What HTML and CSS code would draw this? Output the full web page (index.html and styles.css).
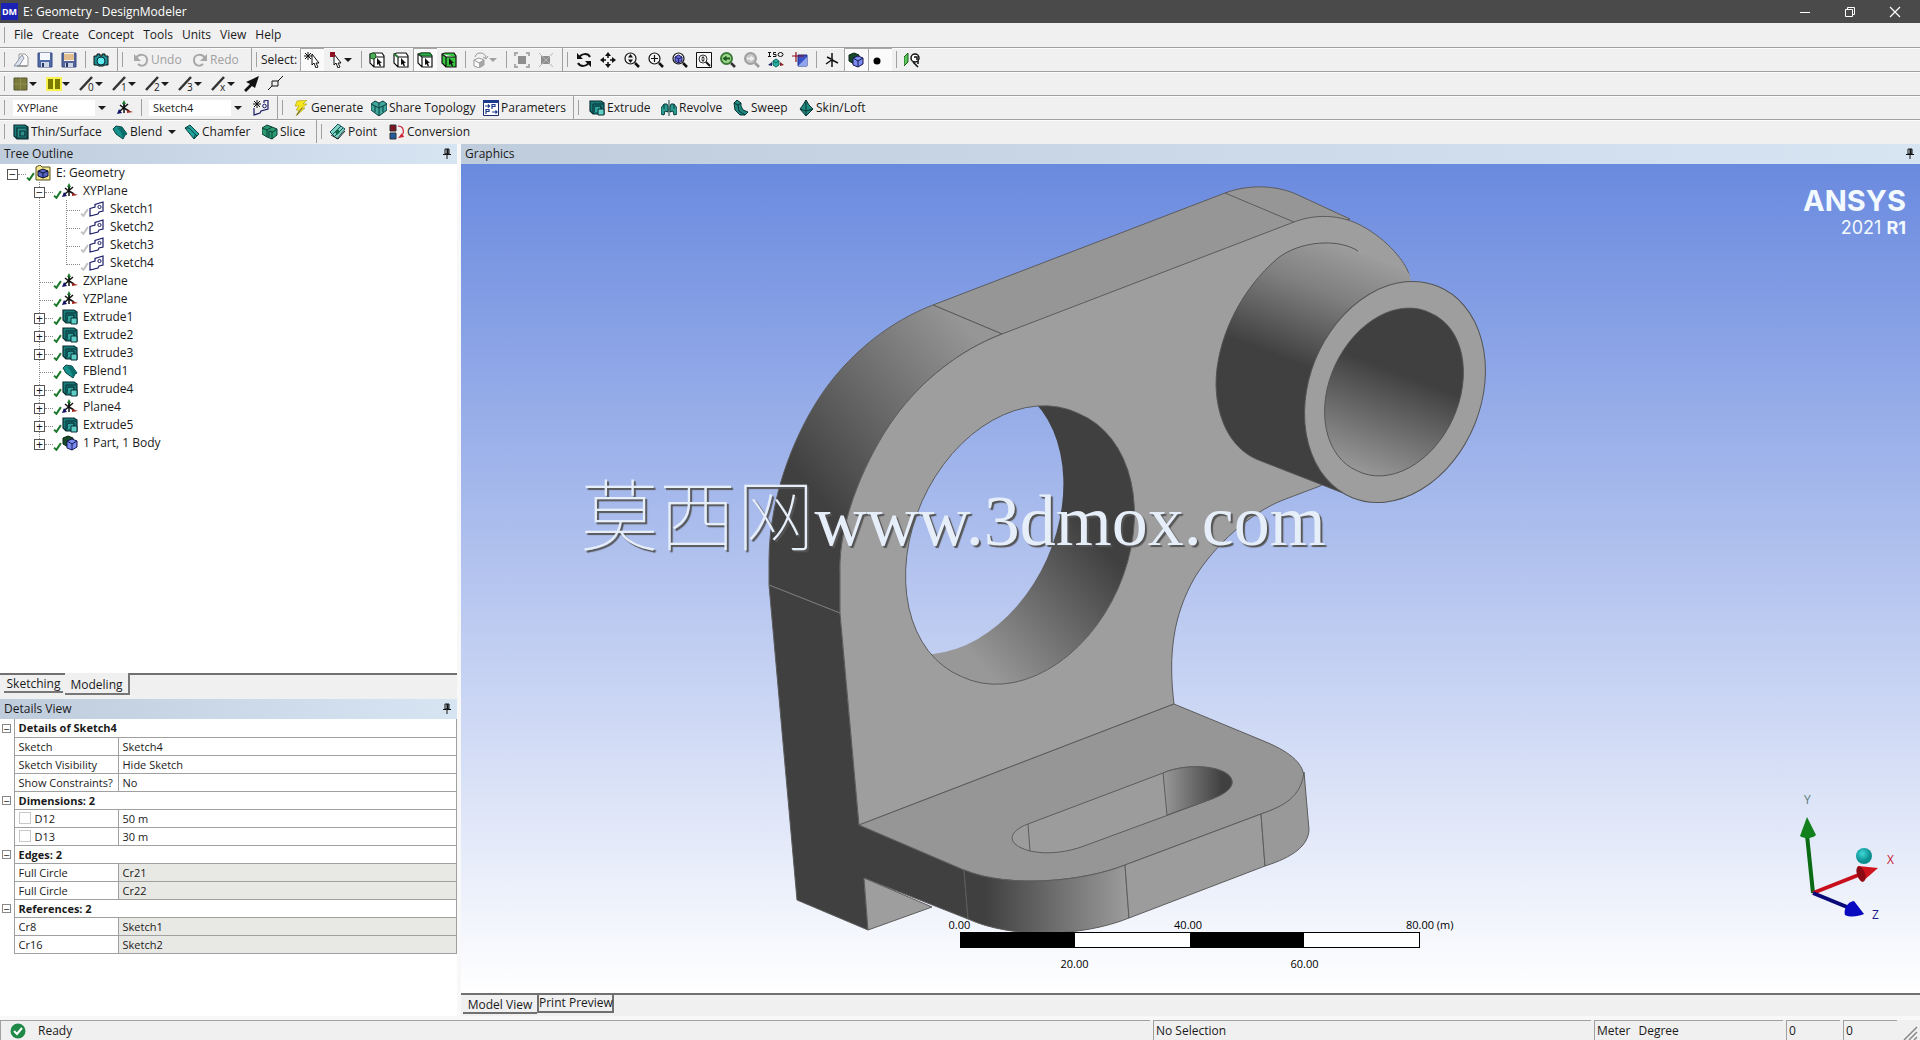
FILE: index.html
```html
<!DOCTYPE html>
<html lang="en">
<head>
<meta charset="utf-8">
<title>E: Geometry - DesignModeler</title>
<link rel="stylesheet" href="styles.css">
</head>
<body>
<svg class="defs" aria-hidden="true">
  <symbol id="i-new" viewBox="0 0 16 16"><path d="M6 2h6l3 3v9H6z" fill="#fafafa" stroke="#999"/><path d="M1 14 9 3l2 3-5 8z" fill="#dde3ee" stroke="#8a93a8"/><path d="M4 14h10" stroke="#777"/></symbol>
  <symbol id="i-save" viewBox="0 0 16 16"><path d="M1 1h14v14H1z" fill="#4f6ba6" stroke="#3a4d80"/><path d="M3 1h10v7H3z" fill="#f4f7fc"/><path d="M4 10h8v5H4z" fill="#cdd5e4"/><path d="M5 11h2v4H5z" fill="#26376a"/></symbol>
  <symbol id="i-saveas" viewBox="0 0 16 16"><path d="M1 1h14v14H1z" fill="#55659a" stroke="#3a4d80"/><path d="M3 1h10v8H3z" fill="#fbf3e4"/><path d="M3 3h10M3 5h10M3 7h10" stroke="#c98b3c"/><path d="M4 11h8v4H4z" fill="#cdd5e4"/><path d="M5 11h2v4H5z" fill="#26376a"/></symbol>
  <symbol id="i-camera" viewBox="0 0 16 16"><path d="M1 4h3V2h3v2h2V2h3v2h3v9h-3l-2 1H6l-2-1H1z" fill="#1d8f95" stroke="#111"/><circle cx="8" cy="9" r="4" fill="#5ff0f0" stroke="#123"/></symbol>
  <symbol id="i-undo" viewBox="0 0 16 16"><path d="M3 6c3-5 11-4 11 2s-6 7-9 4" fill="none" stroke="#a8a8a8" stroke-width="2"/><path d="M1 2v7h7z" fill="#a8a8a8"/></symbol>
  <symbol id="i-redo" viewBox="0 0 16 16"><path d="M13 6C10 1 2 2 2 8s6 7 9 4" fill="none" stroke="#a8a8a8" stroke-width="2"/><path d="M15 2v7H8z" fill="#a8a8a8"/></symbol>
  <symbol id="i-selnew" viewBox="0 0 16 16"><path d="M4 0v8M0 4h8M1 1l6 6M7 1 1 7" stroke="#111"/><path d="m8 2 7 9h-3l2 4-2 1-2-5-2 2z" fill="#fff" stroke="#111"/></symbol>
  <symbol id="i-selmode" viewBox="0 0 16 16"><path d="m6 2 7 9h-3l2 4-2 1-2-5-2 2z" fill="#fff" stroke="#111"/><path d="M2 0h5v5H2z" fill="#8c1020"/></symbol>
  <symbol id="i-cube" viewBox="0 0 16 16"><path d="m1 2 3-1h9l2 3v11H5l-4-4zM1 2l4 3h10M5 5v10" stroke="#111" stroke-width="1.2"/><path d="m8 6 5 5H11l1 3-1 .5L9.500 12 8 13z" fill="#111"/></symbol>
  <symbol id="i-rotcube" viewBox="0 0 16 16"><path d="M1 8 6 6l5 2v5l-5 3-5-2z" fill="#fafafa" stroke="#999"/><path d="m6 11 5-3v5l-5 3z" fill="#a5a5a5"/><path d="M1 8l5 3 5-3M2 5c1-6 11-5 11 1M13 7l-3-2m3 2 2-3" fill="none" stroke="#999"/></symbol>
  <symbol id="i-ext" viewBox="0 0 16 16"><path d="M4 4h8v8H4z" fill="#8e8e8e"/><path d="M1 4V1h3M12 1h3v3M1 12v3h3M12 15h3v-3" fill="none" stroke="#aaa" stroke-width="2"/></symbol>
  <symbol id="i-ext2" viewBox="0 0 16 16"><path d="M3 4h9v8H3z" fill="#8e8e8e"/><path d="m1 1 14 14M15 1 1 15" stroke="#b5b5b5"/></symbol>
  <symbol id="i-rotate" viewBox="0 0 16 16"><path d="M3 6c2-5 9-5 11-1M13 10c-2 5-9 5-11 1" fill="none" stroke="#111" stroke-width="2"/><path d="M1 1v6h6zM15 15V9H9z" fill="#111"/></symbol>
  <symbol id="i-pan" viewBox="0 0 16 16"><path d="M8 2v4M8 10v4M2 8h4M10 8h4" stroke="#111" stroke-width="1.500"/><path d="m8 0 3 4H5zM8 16l3-4H5zM0 8l4-3v6zM16 8l-4-3v6z" fill="#111"/></symbol>
  <symbol id="i-lens" viewBox="0 0 16 16"><circle cx="6.500" cy="6.500" r="5.500" fill="#f4f4f4" stroke="#111" stroke-width="1.200"/><path d="m11 11 4 4" stroke="#111" stroke-width="2.500"/></symbol>
  <symbol id="i-zoom" viewBox="0 0 16 16"><use href="#i-lens"/><path d="M6.500 2 9 5.500H4zM6.500 11 9 7.500H4z" fill="#111"/></symbol>
  <symbol id="i-zoomin" viewBox="0 0 16 16"><use href="#i-lens"/><path d="M6.500 3v7M3 6.500h7" stroke="#111" stroke-width="1.200"/></symbol>
  <symbol id="i-zoomfit" viewBox="0 0 16 16"><use href="#i-lens"/><path d="m3 5 3.500-2L10 5v4l-3.500 2L3 9z" fill="#6a6ad8" stroke="#1b1b66"/><path d="m3 5 3.500 2L10 5M6.500 7v4" stroke="#1b1b66" fill="none"/></symbol>
  <symbol id="i-zoombox" viewBox="0 0 16 16"><path d="M.5.5h15v15H.5z" fill="#f7f7f7" stroke="#111"/><circle cx="7" cy="7" r="4" fill="none" stroke="#333"/><path d="m10 10 4 4" stroke="#111" stroke-width="2"/><path d="m7 4 2 2.500H5zM7 10l2-2.500H5z" fill="#333"/></symbol>
  <symbol id="i-prev" viewBox="0 0 16 16"><circle cx="6.500" cy="6.500" r="5.500" fill="#9edb8e" stroke="#3c7a38" stroke-width="2"/><path d="m11 11 4 4" stroke="#333" stroke-width="2.500"/><path d="m2.500 6.500 4-3v2H10v2H6.500v2z" fill="#1b5a1b"/></symbol>
  <symbol id="i-next" viewBox="0 0 16 16"><circle cx="6.500" cy="6.500" r="5.500" fill="#c6c6c6" stroke="#9f9f9f" stroke-width="2"/><path d="m11 11 4 4" stroke="#9a9a9a" stroke-width="2.500"/><path d="m10.500 6.500-4-3v2H3v2h3.500v2z" fill="#eee"/></symbol>
  <symbol id="i-iso" viewBox="0 0 16 16"><path d="M1.500 0v5M0 .5h3M0 4.500h3M8 .5H5.500v2H8v2H5" stroke="#111" fill="none"/><ellipse cx="12.500" cy="2.500" rx="2.500" ry="2" fill="none" stroke="#111"/><path d="m8 7 3 2v4l-3 2-3-2V9z" fill="#2bb0a0" stroke="#0c6a62"/><path d="m5 9 3 2 3-2" stroke="#0c6a62" fill="none"/><path d="m0 13 4-3v4z" fill="#226"/><path d="m16 13-4-3v4z" fill="#822"/></symbol>
  <symbol id="i-lookat" viewBox="0 0 16 16"><path d="M6 3h9v11H6z" fill="#3a52c8" stroke="#1b2d88"/><path d="M6 14 15 5v9z" fill="#8fa5ee"/><path d="M0 4h12M4 0v10" stroke="#8c1020" stroke-width="1.200"/></symbol>
  <symbol id="i-axes" viewBox="0 0 16 16"><path d="M8 1v14M8 8l6 3M2 12l7-5M3 5l4 2" stroke="#111" stroke-width="1.500"/></symbol>
  <symbol id="i-body" viewBox="0 0 16 16"><path d="m1 3 5-2 5 2v7l-5 2-5-3z" fill="#164a28" stroke="#0a2413"/><path d="m5 6 5-2 5 2v6l-5 3-5-2z" fill="#7a8cf0" stroke="#161650"/><path d="m5 6 5 3 5-3M10 9v6" stroke="#161650" fill="none"/></symbol>
  <symbol id="i-dot" viewBox="0 0 16 16"><circle cx="5" cy="9" r="3.500" fill="#000"/></symbol>
  <symbol id="i-face" viewBox="0 0 16 16"><path d="M0 5 4 1v9l-4 4z" fill="#58c858" stroke="#1c5c1c"/><circle cx="11" cy="6" r="4" fill="#fff" stroke="#111" stroke-width="1.500"/><path d="M10 5h3v3M9 10l5 5M14 9v3" stroke="#111" fill="none" stroke-width="1.500"/></symbol>
  <symbol id="i-sq1" viewBox="0 0 16 16"><path d="M1 2h13v12H1z" fill="#7b7b3c" stroke="#555530"/><path d="M7.500 2v12M1 8h13" stroke="#8f8f4e"/></symbol>
  <symbol id="i-sq2" viewBox="0 0 16 16"><path d="M0 1h16v14H0z" fill="#f6f14e"/><path d="M2 3h5v10H2zM9 3h5v10H9z" fill="#7b7b00"/></symbol>
  <symbol id="i-edge" viewBox="0 0 16 16"><path d="M1 14 13 1" stroke="#333" stroke-width="2.500"/></symbol>
  <symbol id="i-arrow" viewBox="0 0 16 16"><path d="m15 0-4 12-3-2-6 6-2-2 6-6-4-2z" fill="#111"/></symbol>
  <symbol id="i-point2" viewBox="0 0 16 16"><path d="M4 5h6v5H4zM10 5l5-5M4 10l-4 4" fill="none" stroke="#111"/></symbol>
  <symbol id="i-plane" viewBox="0 0 16 16"><path d="M7 8V2" stroke="#1d7a2c" stroke-width="1.500"/><path d="M7 0 9 4H5z" fill="#1d7a2c"/><path d="m3 5 5 4M7 4v9M11 4 3 11" stroke="#111" stroke-width="1.500"/><path d="m0 14 5-1-3-4z" fill="#111166"/><path d="m7 8 5 3" stroke="#111" stroke-width="1.500"/><path d="m16 12-6-2v3z" fill="#a02820"/></symbol>
  <symbol id="i-sketch" viewBox="0 0 16 16"><path d="M1 7.500 6 6V3.500L14 1v9l-4 1-1 2-8 2z" fill="#fff" stroke="#1a1a66" stroke-width="1.200"/><circle cx="10.500" cy="6" r="1.600" fill="none" stroke="#1a1a66"/></symbol>
  <symbol id="i-newsketch" viewBox="0 0 16 16"><path d="M1 8v7l6-2 1-2 7-2V0l-4 1v2" fill="none" stroke="#1a1a66" stroke-width="1.200"/><circle cx="11.500" cy="6" r="1.800" fill="none" stroke="#1a1a66"/><path d="M4 0v8M0 4h8M1 1l6 6M7 1 1 7" stroke="#111"/></symbol>
  <symbol id="i-bolt" viewBox="0 0 16 16"><path d="m4 1 10-1-4 4h4l-5 4h3L3 16l3-6H3l3-4H2z" fill="#f5e71c" stroke="#a89a10" stroke-width=".6"/><path d="m9 8-5 7" stroke="#555"/></symbol>
  <symbol id="i-share" viewBox="0 0 16 16"><path d="m0 4 4-3 4 2 4-2 4 3v6l-8 6-8-6z" fill="#3fa79d" stroke="#0b3f3c"/><path d="m0 4 8 4 8-4M8 3v13M4 6v6M12 6v6" stroke="#0b3f3c" fill="none"/></symbol>
  <symbol id="i-param" viewBox="0 0 16 16"><path d="M.5.5h15v15H.5z" fill="#fff" stroke="#1b2d6e"/><path d="M0 0h16v3H0z" fill="#1b3a8e"/><path d="M2 6h4M5 4.500 6.500 6 5 7.500M9 9V4.500h3v2H9M3 14V9.500h3v2H3M9 12h5M12.500 10.500 14 12l-1.500 1.500" stroke="#1b3a8e" fill="none" stroke-width="1.200"/></symbol>
  <symbol id="i-extrude" viewBox="0 0 16 16"><path d="M1 1h11l3 2v11H4l-3-3z" fill="#157a78" stroke="#0a2c30" stroke-width="1.200"/><path d="M4 4h10M4 4v10M6 12V6h6v4" fill="none" stroke="#0a2c30"/><path d="M6 7h5v5H6z" fill="#2fa39c"/><path d="M9 9h6v6H9z" fill="#5fd0c8" stroke="#0a2c30"/></symbol>
  <symbol id="i-revolve" viewBox="0 0 16 16"><path d="M0 14V8l3-4h3l1 3v5l-3-1-1 4zM16 14V8l-3-4h-3L9 7v5l3-1 1 4z" fill="#2b9a90" stroke="#0b3f3c"/><path d="M8 0v16M3 4v5M13 4v5" stroke="#0b3f3c"/></symbol>
  <symbol id="i-sweep" viewBox="0 0 16 16"><path d="m1 3 3-3 4 3v3l2 4 5 2-3 3H7l-5-5z" fill="#1f8880" stroke="#0b3433"/><path d="m1 3 4 2 3-2M5 5l1 6 6 4" stroke="#0b3433" fill="none"/></symbol>
  <symbol id="i-skin" viewBox="0 0 16 16"><path d="m8 0 3 5 4 4-7 7-6-7 3-4z" fill="#1f8a80" stroke="#0b3433"/><path d="M8 0v16M2 9l6 2 7-2" stroke="#0b3433" fill="none"/></symbol>
  <symbol id="i-thin" viewBox="0 0 16 16"><path d="M1 1h11l3 2v12H4l-3-3z" fill="#157a78" stroke="#0a2c30" stroke-width="1.200"/><path d="M4 4h10v10H4zM7 7h5v5H7z" fill="#2b8f8c" stroke="#0a2c30" stroke-width="1.200"/></symbol>
  <symbol id="i-blend" viewBox="0 0 16 16"><path d="M1 5 4 2l6 1 5 7-2 1-2 4-7-5z" fill="#16918c" stroke="#0b4442"/><path d="m10 3 5 7-2 1-2 4c-1-5-2-8-6-11z" fill="#0c6e6c"/></symbol>
  <symbol id="i-chamfer" viewBox="0 0 16 16"><path d="m1 4 5-3 9 9-5 5z" fill="#1fa39a" stroke="#0b4442"/><path d="m1 4 4 0 8 8M10 15l1-4" fill="none" stroke="#0b4442"/></symbol>
  <symbol id="i-slice" viewBox="0 0 16 16"><path d="m0 4 5-3 5 2 5 2v6l-5 4-5-2-5-3z" fill="#2b9a6e" stroke="#0b3f3c"/><path d="m0 4 5 2 5-3M5 6v7M7 7l4 1 4-3M10 8v7M7 7v6" stroke="#0b3f3c" fill="none"/></symbol>
  <symbol id="i-point" viewBox="0 0 16 16"><path d="m0 8 8-8 7 5-8 10z" fill="#7ed0c0" stroke="#11525a"/><path d="m3 10 8-8M5 12l8-8" stroke="#11525a"/><path d="m5 8 3-3 2 3-3 3z" fill="#0e6b48"/><path d="m1 11 7 4 7-8" stroke="#222" fill="none"/></symbol>
  <symbol id="i-conv" viewBox="0 0 16 16"><path d="M1 1h6v6H1z" fill="#7c1424" stroke="#333"/><path d="M1 9h6v6H1z" fill="#1f5a9c" stroke="#333"/><path d="M9 2c5 0 6 4 5 8" fill="none" stroke="#c23" stroke-width="1.200"/><path d="m9 14 6-1-2-4z" fill="#c23"/></symbol>
  <symbol id="i-root" viewBox="0 0 16 16"><path d="M1 2 5 0l2 2h8v13H1z" fill="#f3e78c" stroke="#55501c"/><path d="m3 6 5-2 5 2v5l-5 2-5-2z" fill="#5566c0" stroke="#10103c"/><path d="m3 6 5 2 5-2M8 8v5" stroke="#10103c" fill="none"/></symbol>
  <symbol id="i-check" viewBox="0 0 8 8"><path d="m1 5 2 2 4-6" fill="none" stroke="currentColor" stroke-width="1.800"/></symbol>
  <symbol id="i-pin" viewBox="0 0 8 12"><path d="M2 1h4v5H2zM0 6.500h8M4 7v4" fill="none" stroke="#111"/><path d="M4.500 1v5" stroke="#111" stroke-width="2"/></symbol>
</svg>

<header class="titlebar">
  <span class="app-badge">DM</span>
  <h1>E: Geometry - DesignModeler</h1>
  <div class="window-buttons">
    <button aria-label="Minimize"><svg viewBox="0 0 12 12"><path d="M1 6.500h10" stroke="#fff"/></svg></button>
    <button aria-label="Restore"><svg viewBox="0 0 12 12"><path d="M1.500 3.500h7v7h-7zM3.500 3V1.500h7v7H9" fill="none" stroke="#fff"/></svg></button>
    <button aria-label="Close"><svg viewBox="0 0 12 12"><path d="m1 1 10 10M11 1 1 11" stroke="#fff" stroke-width="1.200"/></svg></button>
  </div>
</header>

<nav class="bar menubar" aria-label="Menu">
  <button>File</button><button>Create</button><button>Concept</button><button>Tools</button><button>Units</button><button>View</button><button>Help</button>
</nav>

<div class="bar">
  <div class="group">
    <button class="tool" aria-label="New"><svg><use href="#i-new"/></svg></button>
    <button class="tool" aria-label="Save"><svg><use href="#i-save"/></svg></button>
    <button class="tool" aria-label="Save as"><svg><use href="#i-saveas"/></svg></button>
    <i class="sep"></i>
    <button class="tool" aria-label="Image capture"><svg><use href="#i-camera"/></svg></button>
  </div>
  <div class="group wide">
    <button class="tool text w59" disabled><svg><use href="#i-undo"/></svg>Undo</button>
    <button class="tool text w59" disabled><svg><use href="#i-redo"/></svg>Redo</button>
  </div>
  <div class="group">
    <span class="bar-label">Select:</span>
    <button class="tool pressed" aria-label="New selection"><svg><use href="#i-selnew"/></svg></button>
    <button class="tool drop" aria-label="Select mode"><svg><use href="#i-selmode"/></svg></button>
    <i class="sep"></i>
    <button class="tool" aria-label="Points"><svg fill="#fff"><use href="#i-cube"/><circle cx="4" cy="4" r="3" fill="#4fae5a" stroke="#155c20"/></svg></button>
    <button class="tool" aria-label="Edges"><svg fill="#fff"><use href="#i-cube"/><path d="m1 2 4 3" stroke="#2a7a34" stroke-width="2"/></svg></button>
    <button class="tool pressed" aria-label="Faces"><svg fill="#fff"><use href="#i-cube"/><path d="m2 2 3-1h8l2 3H5z" fill="#2fae4a" stroke="#0e5c20"/></svg></button>
    <button class="tool" aria-label="Bodies"><svg fill="#35c83f"><use href="#i-cube"/></svg></button>
    <i class="sep"></i>
    <button class="tool drop" disabled aria-label="Plane orientation"><svg><use href="#i-rotcube"/></svg></button>
    <i class="sep"></i>
    <button class="tool" disabled aria-label="Extend selection"><svg><use href="#i-ext"/></svg></button>
    <button class="tool" disabled aria-label="Shrink selection"><svg><use href="#i-ext2"/></svg></button>
  </div>
  <div class="group last">
    <button class="tool" aria-label="Rotate"><svg><use href="#i-rotate"/></svg></button>
    <button class="tool" aria-label="Pan"><svg><use href="#i-pan"/></svg></button>
    <button class="tool" aria-label="Zoom"><svg><use href="#i-zoom"/></svg></button>
    <button class="tool" aria-label="Box zoom"><svg><use href="#i-zoomin"/></svg></button>
    <button class="tool" aria-label="Zoom to fit"><svg><use href="#i-zoomfit"/></svg></button>
    <button class="tool" aria-label="Magnifier"><svg><use href="#i-zoombox"/></svg></button>
    <button class="tool" aria-label="Previous view"><svg><use href="#i-prev"/></svg></button>
    <button class="tool" disabled aria-label="Next view"><svg><use href="#i-next"/></svg></button>
    <button class="tool" aria-label="Isometric view"><svg><use href="#i-iso"/></svg></button>
    <button class="tool" aria-label="Look at sketch"><svg><use href="#i-lookat"/></svg></button>
    <i class="sep"></i>
    <button class="tool" aria-label="Display plane"><svg><use href="#i-axes"/></svg></button>
    <button class="tool pressed" aria-label="Display model"><svg><use href="#i-body"/></svg></button>
    <button class="tool pressed" aria-label="Display points"><svg><use href="#i-dot"/></svg></button>
    <i class="sep"></i>
    <button class="tool" aria-label="Look at face"><svg><use href="#i-face"/></svg></button>
  </div>
</div>

<div class="bar">
  <div class="group last">
    <button class="tool drop" aria-label="Face color"><svg><use href="#i-sq1"/></svg></button>
    <button class="tool drop" aria-label="Edge color"><svg><use href="#i-sq2"/></svg></button>
    <button class="tool drop edge" aria-label="Free edges"><svg><use href="#i-edge"/></svg><span>0</span></button>
    <button class="tool drop edge" aria-label="Single edges"><svg><use href="#i-edge"/></svg><span>1</span></button>
    <button class="tool drop edge" aria-label="Double edges"><svg><use href="#i-edge"/></svg><span>2</span></button>
    <button class="tool drop edge" aria-label="Triple edges"><svg><use href="#i-edge"/></svg><span>3</span></button>
    <button class="tool drop edge" aria-label="Multiple edges"><svg><use href="#i-edge"/></svg><span>x</span></button>
    <button class="tool" aria-label="Edge direction"><svg><use href="#i-arrow"/></svg></button>
    <button class="tool" aria-label="Vertices"><svg><use href="#i-point2"/></svg></button>
  </div>
</div>

<div class="bar">
  <div class="group">
    <div class="combo"><select aria-label="Active plane"><option>XYPlane</option></select></div>
    <button class="tool" aria-label="New plane"><svg><use href="#i-plane"/></svg></button>
    <i class="sep"></i>
    <div class="combo"><select aria-label="Active sketch"><option>Sketch4</option></select></div>
    <button class="tool" aria-label="New sketch"><svg><use href="#i-newsketch"/></svg></button>
  </div>
  <div class="group wide">
    <button class="tool text w78"><svg><use href="#i-bolt"/></svg>Generate</button>
    <button class="tool text w112"><svg><use href="#i-share"/></svg>Share Topology</button>
    <button class="tool text w90"><svg><use href="#i-param"/></svg>Parameters</button>
  </div>
  <div class="group wide last">
    <button class="tool text w72"><svg><use href="#i-extrude"/></svg>Extrude</button>
    <button class="tool text w72"><svg><use href="#i-revolve"/></svg>Revolve</button>
    <button class="tool text w65"><svg><use href="#i-sweep"/></svg>Sweep</button>
    <button class="tool text w78"><svg><use href="#i-skin"/></svg>Skin/Loft</button>
  </div>
</div>

<div class="bar bar-end">
  <div class="group">
    <button class="tool text w99"><svg><use href="#i-thin"/></svg>Thin/Surface</button>
    <button class="tool text drop w72"><svg><use href="#i-blend"/></svg>Blend</button>
    <button class="tool text w78"><svg><use href="#i-chamfer"/></svg>Chamfer</button>
    <button class="tool text w54"><svg><use href="#i-slice"/></svg>Slice</button>
  </div>
  <div class="group last">
    <button class="tool text w59"><svg><use href="#i-point"/></svg>Point</button>
    <button class="tool text w90"><svg><use href="#i-conv"/></svg>Conversion</button>
  </div>
</div>

<main class="workspace">
  <aside class="side">
    <section class="panel tree-panel">
      <h2 class="panel-head">Tree Outline<button aria-label="Pin tree outline"><svg><use href="#i-pin"/></svg></button></h2>
      <div class="tree-scroll">
      <ul class="tree">
        <li><div class="node"><button class="box" aria-label="Collapse">−</button><i class="dots"></i><svg class="tick"><use href="#i-check"/></svg><svg class="ico"><use href="#i-root"/></svg><span>E: Geometry</span></div>
          <ul>
            <li><div class="node"><button class="box" aria-label="Collapse">−</button><i class="dots"></i><svg class="tick"><use href="#i-check"/></svg><svg class="ico"><use href="#i-plane"/></svg><span>XYPlane</span></div>
              <ul>
                <li><div class="node leaf"><i class="dots"></i><svg class="tick off"><use href="#i-check"/></svg><svg class="ico"><use href="#i-sketch"/></svg><span>Sketch1</span></div></li>
                <li><div class="node leaf"><i class="dots"></i><svg class="tick off"><use href="#i-check"/></svg><svg class="ico"><use href="#i-sketch"/></svg><span>Sketch2</span></div></li>
                <li><div class="node leaf"><i class="dots"></i><svg class="tick off"><use href="#i-check"/></svg><svg class="ico"><use href="#i-sketch"/></svg><span>Sketch3</span></div></li>
                <li><div class="node leaf"><i class="dots"></i><svg class="tick off"><use href="#i-check"/></svg><svg class="ico"><use href="#i-sketch"/></svg><span>Sketch4</span></div></li>
              </ul>
            </li>
            <li><div class="node leaf"><i class="dots"></i><svg class="tick"><use href="#i-check"/></svg><svg class="ico"><use href="#i-plane"/></svg><span>ZXPlane</span></div></li>
            <li><div class="node leaf"><i class="dots"></i><svg class="tick"><use href="#i-check"/></svg><svg class="ico"><use href="#i-plane"/></svg><span>YZPlane</span></div></li>
            <li><div class="node"><button class="box" aria-label="Expand">+</button><i class="dots"></i><svg class="tick"><use href="#i-check"/></svg><svg class="ico"><use href="#i-extrude"/></svg><span>Extrude1</span></div></li>
            <li><div class="node"><button class="box" aria-label="Expand">+</button><i class="dots"></i><svg class="tick"><use href="#i-check"/></svg><svg class="ico"><use href="#i-extrude"/></svg><span>Extrude2</span></div></li>
            <li><div class="node"><button class="box" aria-label="Expand">+</button><i class="dots"></i><svg class="tick"><use href="#i-check"/></svg><svg class="ico"><use href="#i-extrude"/></svg><span>Extrude3</span></div></li>
            <li><div class="node leaf"><i class="dots"></i><svg class="tick"><use href="#i-check"/></svg><svg class="ico"><use href="#i-blend"/></svg><span>FBlend1</span></div></li>
            <li><div class="node"><button class="box" aria-label="Expand">+</button><i class="dots"></i><svg class="tick"><use href="#i-check"/></svg><svg class="ico"><use href="#i-extrude"/></svg><span>Extrude4</span></div></li>
            <li><div class="node"><button class="box" aria-label="Expand">+</button><i class="dots"></i><svg class="tick"><use href="#i-check"/></svg><svg class="ico"><use href="#i-plane"/></svg><span>Plane4</span></div></li>
            <li><div class="node"><button class="box" aria-label="Expand">+</button><i class="dots"></i><svg class="tick"><use href="#i-check"/></svg><svg class="ico"><use href="#i-extrude"/></svg><span>Extrude5</span></div></li>
            <li><div class="node"><button class="box" aria-label="Expand">+</button><i class="dots"></i><svg class="tick"><use href="#i-check"/></svg><svg class="ico"><use href="#i-body"/></svg><span>1 Part, 1 Body</span></div></li>
          </ul>
        </li>
      </ul>
      </div>
      <div class="tabs side-tabs"><button class="tab">Sketching</button><button class="tab active">Modeling</button></div>
    </section>
    <section class="panel details-panel">
      <h2 class="panel-head">Details View<button aria-label="Pin details view"><svg><use href="#i-pin"/></svg></button></h2>
      <table class="details">
        <colgroup><col class="col-gut"><col class="col-key"><col></colgroup>
        <tbody>
          <tr><td class="gut"><button class="box" aria-label="Collapse">−</button></td><th colspan="2">Details of Sketch4</th></tr>
          <tr><td class="gut"></td><td>Sketch</td><td>Sketch4</td></tr>
          <tr><td class="gut"></td><td>Sketch Visibility</td><td>Hide Sketch</td></tr>
          <tr><td class="gut"></td><td>Show Constraints?</td><td>No</td></tr>
          <tr><td class="gut"><button class="box" aria-label="Collapse">−</button></td><th colspan="2">Dimensions: 2</th></tr>
          <tr><td class="gut"></td><td><label><input type="checkbox">D12</label></td><td>50 m</td></tr>
          <tr><td class="gut"></td><td><label><input type="checkbox">D13</label></td><td>30 m</td></tr>
          <tr><td class="gut"><button class="box" aria-label="Collapse">−</button></td><th colspan="2">Edges: 2</th></tr>
          <tr><td class="gut"></td><td>Full Circle</td><td class="ro">Cr21</td></tr>
          <tr><td class="gut"></td><td>Full Circle</td><td class="ro">Cr22</td></tr>
          <tr><td class="gut"><button class="box" aria-label="Collapse">−</button></td><th colspan="2">References: 2</th></tr>
          <tr><td class="gut"></td><td>Cr8</td><td class="ro">Sketch1</td></tr>
          <tr><td class="gut"></td><td>Cr16</td><td class="ro">Sketch2</td></tr>
        </tbody>
      </table>
    </section>
  </aside>

  <section class="graphics">
    <h2 class="panel-head">Graphics<button aria-label="Pin graphics"><svg><use href="#i-pin"/></svg></button></h2>
    <div class="canvas">
      <svg class="model" viewBox="461 164 1459 829" role="img" aria-label="Bracket model">
        <defs>
          <linearGradient id="g-arc" gradientUnits="userSpaceOnUse" x1="965" y1="325" x2="795" y2="470"><stop offset="0" stop-color="#969696"/><stop offset="1" stop-color="#404040"/></linearGradient>
          <linearGradient id="g-boss" gradientUnits="userSpaceOnUse" x1="1350" y1="246" x2="1304" y2="366"><stop offset="0" stop-color="#9e9e9e"/><stop offset=".4" stop-color="#808080"/><stop offset="1" stop-color="#404040"/></linearGradient>
          <linearGradient id="g-bore" gradientUnits="userSpaceOnUse" x1="1412" y1="378" x2="1374" y2="478"><stop offset="0" stop-color="#404040"/><stop offset="1" stop-color="#989898"/></linearGradient>
          <linearGradient id="g-hole" gradientUnits="userSpaceOnUse" x1="1110" y1="555" x2="985" y2="670"><stop offset="0" stop-color="#404040"/><stop offset="1" stop-color="#989898"/></linearGradient>
          <linearGradient id="g-base" gradientUnits="userSpaceOnUse" x1="985" y1="0" x2="1125" y2="0"><stop offset="0" stop-color="#404040"/><stop offset="1" stop-color="#9a9a9a"/></linearGradient>
          <linearGradient id="g-slot" gradientUnits="userSpaceOnUse" x1="1166" y1="0" x2="1222" y2="0"><stop offset="0" stop-color="#949494"/><stop offset="1" stop-color="#404040"/></linearGradient>
          <mask id="m-hole" maskUnits="userSpaceOnUse" x="461" y="164" width="1459" height="830"><path d="M461 164h1459v830H461z" fill="#fff"/><ellipse cx="951" cy="516" rx="144" ry="105" transform="rotate(-66 951 516)" fill="#000"/></mask>
        </defs>
        <path d="M1078.600 413.500A144 105 -66 1 1 961.400 676.500A144 105 -66 1 1 1078.600 413.500Z" fill="url(#g-hole)" stroke="url(#g-hole)" mask="url(#m-hole)"/>
        <g stroke="#5c5c5c" stroke-width="1" stroke-linejoin="round">
          <path d="M933 305 1225 193C1246 185 1275 184 1298 195L1350 219 1294 240 1002 334Z" fill="#969696"/>
          <path d="M933 305C891 321 853 351 826 388C799 425 769 491 769 561V585L840 613V573C838 520 868 454 895 417C922 380 960 350 1002 334Z" fill="url(#g-arc)"/>
          <path d="M769 585 797 900 868 930 864 878 968 919 964 870 859 825 840 613Z" fill="#404040"/>
          <path d="M864 878 932 907 868 930Z" fill="#9e9e9e"/>
          <path fill-rule="evenodd" fill="#9e9e9e" d="M1002 334 1294 222C1315 214 1340 214 1362 226C1388 240 1405 262 1409 274L1400 440 1320 486 1283 500C1250 513 1215 545 1195 577C1173 615 1168 655 1174 704L859 825 840 613V573C838 520 868 454 895 417C922 380 960 350 1002 334ZM1078.600 413.500A144 105 -66 1 1 961.400 676.500A144 105 -66 1 1 1078.600 413.500Z"/>
          <path d="M1225 193 1294 222" fill="none"/>
          <path d="M859 825 1174 704 1266 742C1292 753 1305 765 1304 780C1301 797 1284 806 1261 814L1125 865C1085 881 1010 889 964 870Z" fill="#969696"/>
          <path d="M964 870C1010 889 1085 881 1125 865L1129 918C1082 937 1012 939 968 919Z" fill="url(#g-base)"/>
          <path d="M1125 865 1261 814 1265 866 1129 918Z" fill="#9c9c9c"/>
          <path d="M1261 814C1284 806 1301 797 1304 772L1309 830C1308 846 1293 857 1265 866Z" fill="#999"/>
          <path d="M1028 824 1163 773C1188 762 1230 766 1232 781C1233 790 1220 796 1209 800L1084 846C1068 852 1048 855 1030 851C1004 844 1009 831 1028 824Z" fill="#9c9c9c"/>
          <path d="M1163 773C1188 762 1230 766 1232 781C1233 790 1220 796 1209 800L1167 815Z" fill="url(#g-slot)"/>
          <path d="M1028 824 1030 851" fill="none"/>
        </g>
        <path d="M1358 251C1338 238 1300 241 1278 258C1240 290 1216 340 1216 385C1217 425 1235 452 1261 461L1343 493 1420 400 1411 281 1409 273Z" fill="url(#g-boss)"/>
        <path d="M1358 251C1338 238 1300 241 1278 258C1240 290 1216 340 1216 385C1217 425 1235 452 1261 461L1343 493" fill="none" stroke="#555"/>
        <ellipse cx="1395" cy="392" rx="114" ry="86" transform="rotate(-68 1395 392)" fill="#9e9e9e" stroke="#555"/>
        <path d="M1430.800 313.200A87 63 -65 1 1 1357.200 470.800A87 63 -65 1 1 1430.800 313.200Z" fill="url(#g-bore)" stroke="#555"/>
        <path d="m769 585 71 28" stroke="#777"/>
      </svg>
      <div class="logo"><b>ANSYS</b><span>2021 <strong>R1</strong></span></div>
      <p class="watermark">莫西网<span>www.3dmox.com</span></p>
      <div class="ruler">
        <div class="ruler-row"><span>0.00</span><span>40.00</span><span>80.00 (m)</span></div>
        <div class="ruler-bar"><i></i><i></i><i></i><i></i></div>
        <div class="ruler-row below"><span>20.00</span><span>60.00</span></div>
      </div>
      <svg class="triad" viewBox="1795 790 110 135" role="img" aria-label="Axes">
        <defs><radialGradient id="g-ball" cx=".4" cy=".35"><stop offset="0" stop-color="#3fd8d8"/><stop offset="1" stop-color="#0a8f90"/></radialGradient></defs>
        <path d="m1813 893-6-58" stroke="#0b6b14" stroke-width="4"/><path d="m1807 817 9 18c-4 4-12 4-16 1z" fill="#12801c"/>
        <path d="m1813 893 48-19" stroke="#c8101c" stroke-width="4"/><path d="m1878 868-16 14c-5-3-6-12-4-16z" fill="#d0141e"/><ellipse cx="1861" cy="874" rx="4" ry="8" fill="#8c0a14" transform="rotate(-20 1861 874)"/>
        <path d="m1813 893 34 14" stroke="#0a0a78" stroke-width="4"/><path d="m1864 914-10-13c-6 0-11 9-9 14 6 3 14 1 19-1z" fill="#0a0ac0"/>
        <circle cx="1864" cy="856" r="8" fill="url(#g-ball)"/>
        <text x="1804" y="804" fill="#5a7a78">Y</text><text x="1887" y="864" fill="#c8202c">X</text><text x="1872" y="919" fill="#1a1a88">Z</text>
      </svg>
    </div>
    <div class="tabs view-tabs"><button class="tab active">Model View</button><button class="tab">Print Preview</button></div>
  </section>
</main>

<footer class="status">
  <div class="cell ready"><svg viewBox="0 0 16 16"><circle cx="8" cy="8" r="7.500" fill="#1f8a48"/><path d="m4 8 3 3 5-6" stroke="#fff" stroke-width="2" fill="none"/></svg>Ready</div>
  <div class="cell selection">No Selection</div>
  <div class="cell units"><span>Meter</span><span>Degree</span></div>
  <div class="cell num">0</div>
  <div class="cell num">0</div>
  <svg class="grip" viewBox="0 0 14 14"><path d="M1 14 14 1M6 14l8-8M11 14l3-3" stroke="#888" stroke-width="1.500"/></svg>
</footer>
</body>
</html>
```
FILE: styles.css
```css
* { box-sizing: border-box; }

body {
  margin: 0;
  height: 100vh;
  display: flex;
  flex-direction: column;
  background: #f0f0f0;
  color: #1a1a1a;
  font: 12px/18px "Open Sans", "Noto Sans", sans-serif;
  overflow: hidden;
}

button, select, input { font: inherit; color: inherit; }
button { border: 0; padding: 0; background: none; white-space: nowrap; }
h1, h2, p, ul { margin: 0; padding: 0; font-size: inherit; font-weight: normal; }
ul { list-style: none; }
.defs { position: absolute; width: 0; height: 0; }

/* Title bar */
.titlebar {
  display: flex;
  align-items: center;
  flex: none;
  height: 23px;
  background: #4a4a4a;
  color: #fff;
}
.app-badge {
  width: 17px;
  height: 17px;
  margin: 0 5px 0 1px;
  background: #1c22b4;
  font-size: 9px;
  line-height: 17px;
  font-weight: 700;
  text-align: center;
}
.window-buttons { display: flex; margin-left: auto; margin-right: 3px; }
.window-buttons button { width: 45px; height: 22px; }
.window-buttons svg { width: 12px; height: 12px; display: block; margin: 4px auto; }

/* Tool bars */
.bar {
  display: flex;
  flex: none;
  height: 24px;
  border-bottom: 1px solid #a0a0a0;
  box-shadow: inset 0 1px #fcfcfc;
}
.bar-end { border-bottom: 0; }
.menubar, .group { position: relative; }
.menubar::before, .group::before {
  content: "";
  position: absolute;
  left: 4px;
  top: 4px;
  bottom: 4px;
  width: 1px;
  background: #a0a0a0;
}
.menubar { height: 25px; padding-left: 9px; box-shadow: none; }
.menubar button { padding: 0 4px 0 5px; height: 24px; }
.group {
  display: flex;
  height: 23px;
  padding: 0 4px 0 9px;
  border-right: 1px solid #a0a0a0;
}
.group.wide { padding-left: 11px; }
.group.last { border-right: 0; }
.tool {
  position: relative;
  display: flex;
  align-items: center;
  flex: none;
  width: 24px;
  height: 23px;
  padding-left: 4px;
}
.tool svg { flex: none; width: 16px; height: 16px; }
.tool:disabled { color: #a0a0a0; }
.tool.text svg { margin-right: 2px; }
.tool.pressed { background: #fafafa; box-shadow: inset 1px 1px #a8a8a8; }
.tool.drop { width: 33px; }
.tool.drop::after, .combo::after {
  content: "";
  border: 4px solid transparent;
  border-top-color: currentColor;
  border-bottom: 0;
}
.tool.drop.text::after { margin-left: 6px; }
.tool.edge span { position: absolute; left: 13px; top: 9px; font-size: 10px; line-height: 12px; }
.tool.w54 { width: 54px; }
.tool.w59 { width: 59px; }
.tool.w65 { width: 65px; }
.tool.w72 { width: 72px; }
.tool.w78 { width: 78px; }
.tool.w90 { width: 90px; }
.tool.w99 { width: 99px; }
.tool.w112 { width: 112px; }
.bar-label { width: 39px; line-height: 23px; }
.sep { width: 1px; height: 17px; margin: 3px 3px 0 4px; background: #a0a0a0; }
.combo {
  display: flex;
  align-items: center;
  width: 100px;
  margin-left: 4px;
}
.combo select {
  appearance: none;
  width: 82px;
  height: 16px;
  margin-right: 3px;
  padding: 0 0 0 4px;
  border: 0;
  border-radius: 0;
  background: #fff;
  font-size: 11px;
  line-height: 16px;
}

/* Work area */
.workspace { flex: 1; display: flex; min-height: 0; padding-bottom: 4px; background: #f8f8f8; }
.side { flex: none; width: 461px; padding-right: 4px; display: flex; flex-direction: column; }
.panel { display: flex; flex-direction: column; background: #f0f0f0; }
.tree-panel { flex: 1; min-height: 0; }
.details-panel { min-height: 317px; background: #fff; }
.panel-head {
  display: flex;
  justify-content: space-between;
  align-items: center;
  flex: none;
  height: 20px;
  padding: 0 6px 0 4px;
  background: linear-gradient(90deg, #bfccdc, #d7e5f3);
}
.panel-head button { width: 8px; height: 12px; }
.panel-head svg { display: block; width: 8px; height: 12px; }

.box {
  display: block;
  flex: none;
  width: 11px;
  height: 11px;
  border: 1px solid #555;
  background: #fff;
  line-height: 9px;
  text-align: center;
}

/* Tree */
.tree-scroll { flex: 1; min-height: 0; background: #fff; border-bottom: 2px solid #707070; }
.tree { padding-left: 7px; }
.tree ul { position: relative; padding-left: 27px; }
.tree ul::before {
  content: "";
  position: absolute;
  left: 32px;
  top: 0;
  bottom: 7px;
  border-left: 1px dotted #888;
}
.node { position: relative; display: flex; align-items: center; height: 18px; }
.node .box, .node .dots { position: relative; top: 1px; }
.dots { width: 8px; border-top: 1px dotted #888; }
.leaf .dots { width: 14px; margin-left: 5px; }
.tick { flex: none; width: 9px; height: 9px; margin-top: 7px; color: #1d7a2c; }
.tick.off { color: #c4c4c4; }
.ico { flex: none; width: 16px; height: 16px; margin-right: 5px; }

/* Tabs */
.tabs { display: flex; flex: none; align-items: flex-start; background: #f0f0f0; }
.side-tabs { height: 24px; padding-left: 4px; }
.tab { height: 18px; border-bottom: 2px solid #777; }
.side-tabs .tab { width: 59px; }
.side-tabs .tab.active { width: 65px; height: 22px; margin: -2px 0 0 2px; padding-top: 3px; background: #f0f0f0; border-right: 2px solid #777; }

/* Details grid */
.details { width: 100%; table-layout: fixed; border-collapse: collapse; font-size: 11px; line-height: 17px; }
.col-gut { width: 14px; }
.col-key { width: 104px; }
.details td, .details th { height: 18px; padding: 0 0 0 4px; border: 1px solid #a0a0a0; text-align: left; white-space: nowrap; }
.details th { font-weight: 700; }
.details .gut { padding: 0 0 0 2px; border: 0; }
.details .box { width: 9px; height: 9px; line-height: 7px; border-color: #888; }
.details .ro { background: #e8e8e5; }
.details tr:first-child th { border-top: 0; }
.details label { display: flex; align-items: center; }
.details input { appearance: none; width: 12px; height: 12px; margin: 0 4px 0 0; border: 1px solid #c8c8c8; background: #fff; }

/* Graphics */
.graphics { flex: 1; min-width: 0; display: flex; flex-direction: column; }
.canvas {
  position: relative;
  flex: 1;
  min-height: 0;
  overflow: hidden;
  background: linear-gradient(#6a8adf, #fff);
  border-bottom: 2px solid #707070;
}
.model { display: block; width: 100%; height: 100%; }
.logo {
  position: absolute;
  top: 20px;
  right: 14px;
  display: flex;
  flex-direction: column;
  align-items: flex-end;
  color: #f2f9ff;
  font: 18px/20px Inter, sans-serif;
}
.logo b { font-size: 29px; line-height: 34px; }
.watermark {
  position: absolute;
  left: 50%;
  top: 50%;
  margin: -118px 0 0 -610px;
  display: flex;
  align-items: baseline;
  color: #e6eefa;
  font: 100 78px/100px "Noto Sans CJK SC", sans-serif;
  text-shadow: 2px 2px 1px #555;
  white-space: nowrap;
}
.watermark span { font: 72px/100px "Liberation Serif", serif; }
.ruler {
  position: absolute;
  left: 50%;
  bottom: 22px;
  width: 460px;
  margin-left: -231px;
  color: #000;
  font-size: 11px;
  line-height: 14px;
}
.ruler-bar { display: grid; grid-template-columns: repeat(4, 1fr); height: 16px; border: 1px solid #000; background: #fff; }
.ruler-bar i:nth-child(odd) { background: #000; }
.ruler-row { display: flex; justify-content: space-between; margin: 0 -34px 0 -11px; }
.ruler-row.below { justify-content: space-around; margin: 9px 0 0; }
.triad { position: absolute; right: 15px; bottom: 68px; width: 110px; height: 135px; }
.triad text { font: 12px "Open Sans", sans-serif; }
.view-tabs { height: 21px; padding-left: 2px; }
.view-tabs .tab { width: 77px; border: 1px solid #707070; border-width: 0 2px 2px; line-height: 16px; }
.view-tabs .tab.active { width: 74px; height: 21px; margin-top: -2px; padding-top: 4px; background: #f0f0f0; border-width: 0 0 2px; }

/* Status bar */
.status { display: flex; flex: none; height: 20px; gap: 3px; }
.cell { display: flex; align-items: center; padding-left: 2px; border: 1px solid #a0a0a0; border-width: 1px 0 0 1px; line-height: 16px; }
.ready { flex: 1; padding-left: 9px; }
.ready svg { width: 16px; height: 16px; margin-right: 12px; }
.selection { width: 438px; }
.units { width: 189px; gap: 8px; }
.num { width: 54px; }
.grip { width: 20px; height: 14px; margin-top: 6px; }
```
